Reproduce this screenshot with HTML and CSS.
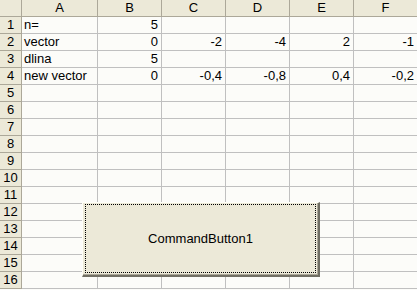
FILE: index.html
```html
<!DOCTYPE html>
<html>
<head>
	<title>Sheet1</title>
	<meta charset="utf-8">
	<link rel="stylesheet" href="styles.css">
</head>
<body>
<div class="book">
	<div class="sheet">
		<div class="corner"></div>
		<div class="colhead">A</div>
		<div class="colhead">B</div>
		<div class="colhead">C</div>
		<div class="colhead">D</div>
		<div class="colhead">E</div>
		<div class="colhead">F</div>

		<div class="rowhead">1</div>
		<div class="cell">n=</div>
		<div class="cell num">5</div>
		<div class="cell"></div>
		<div class="cell"></div>
		<div class="cell"></div>
		<div class="cell"></div>

		<div class="rowhead">2</div>
		<div class="cell">vector</div>
		<div class="cell num">0</div>
		<div class="cell num">-2</div>
		<div class="cell num">-4</div>
		<div class="cell num">2</div>
		<div class="cell num">-1</div>

		<div class="rowhead">3</div>
		<div class="cell">dlina</div>
		<div class="cell num">5</div>
		<div class="cell"></div>
		<div class="cell"></div>
		<div class="cell"></div>
		<div class="cell"></div>

		<div class="rowhead">4</div>
		<div class="cell">new vector</div>
		<div class="cell num">0</div>
		<div class="cell num">-0,4</div>
		<div class="cell num">-0,8</div>
		<div class="cell num">0,4</div>
		<div class="cell num">-0,2</div>

		<div class="rowhead">5</div><div class="cell"></div><div class="cell"></div><div class="cell"></div><div class="cell"></div><div class="cell"></div><div class="cell"></div>
		<div class="rowhead">6</div><div class="cell"></div><div class="cell"></div><div class="cell"></div><div class="cell"></div><div class="cell"></div><div class="cell"></div>
		<div class="rowhead">7</div><div class="cell"></div><div class="cell"></div><div class="cell"></div><div class="cell"></div><div class="cell"></div><div class="cell"></div>
		<div class="rowhead">8</div><div class="cell"></div><div class="cell"></div><div class="cell"></div><div class="cell"></div><div class="cell"></div><div class="cell"></div>
		<div class="rowhead">9</div><div class="cell"></div><div class="cell"></div><div class="cell"></div><div class="cell"></div><div class="cell"></div><div class="cell"></div>
		<div class="rowhead">10</div><div class="cell"></div><div class="cell"></div><div class="cell"></div><div class="cell"></div><div class="cell"></div><div class="cell"></div>
		<div class="rowhead">11</div><div class="cell"></div><div class="cell"></div><div class="cell"></div><div class="cell"></div><div class="cell"></div><div class="cell"></div>
		<div class="rowhead">12</div><div class="cell"></div><div class="cell"></div><div class="cell"></div><div class="cell"></div><div class="cell"></div><div class="cell"></div>
		<div class="rowhead">13</div><div class="cell"></div><div class="cell"></div><div class="cell"></div><div class="cell"></div><div class="cell"></div><div class="cell"></div>
		<div class="rowhead">14</div><div class="cell"></div><div class="cell"></div><div class="cell"></div><div class="cell"></div><div class="cell"></div><div class="cell"></div>
		<div class="rowhead">15</div><div class="cell"></div><div class="cell"></div><div class="cell"></div><div class="cell"></div><div class="cell"></div><div class="cell"></div>
		<div class="rowhead">16</div><div class="cell"></div><div class="cell"></div><div class="cell"></div><div class="cell"></div><div class="cell"></div><div class="cell"></div>
	</div>

	<!-- ActiveX button floats over the grid -->
	<button class="cmd-btn" type="button"><span class="focus">CommandButton1</span></button>
</div>
</body>
</html>
```

FILE: styles.css
```css
html, body{
	margin: 0;
	padding: 0;
	background-color: #fcfcf9;
	overflow: hidden;
}
.book{
	position: relative;
	width: 417px;
	height: 290px;
	overflow: hidden;
	font: 13px/16px "Liberation Sans", Arial, sans-serif;
	color: #000;
}
.sheet{
	display: grid;
	grid-template-columns: 22px 76px repeat(5, 64px);
	grid-auto-rows: 17px;
	width: 418px;
}
.sheet > div{
	box-sizing: border-box;
	white-space: nowrap;
	overflow: hidden;
}
.corner, .colhead, .rowhead{
	background-color: #ece9d8;
	border-right: 1px solid #aca899;
	border-bottom: 1px solid #aca899;
	text-align: center;
}
.cell{
	background-color: #fcfcf9;
	border-right: 1px solid #c0c0c0;
	border-bottom: 1px solid #c0c0c0;
	padding: 0 2px;
}
.num{
	text-align: right;
	padding-right: 3px;
}

.cmd-btn{
	position: absolute;
	left: 82px;
	top: 202px;
	width: 238px;
	height: 75px;
	box-sizing: border-box;
	margin: 0;
	padding: 1px 2px 2px 2px;
	background-color: #ece9d8;
	border-style: solid;
	border-width: 1px 2px 2px 1px;
	border-color: #fffff8 #716f64 #716f64 #fffff8;
	box-shadow: inset -1px -1px 0 #aca899;
	font: 13px "Liberation Sans", Arial, sans-serif;
	color: #000;
	cursor: pointer;
}
.focus{
	display: flex;
	align-items: center;
	justify-content: center;
	height: 100%;
	box-sizing: border-box;
	border: 1px dotted #000;
}
```
